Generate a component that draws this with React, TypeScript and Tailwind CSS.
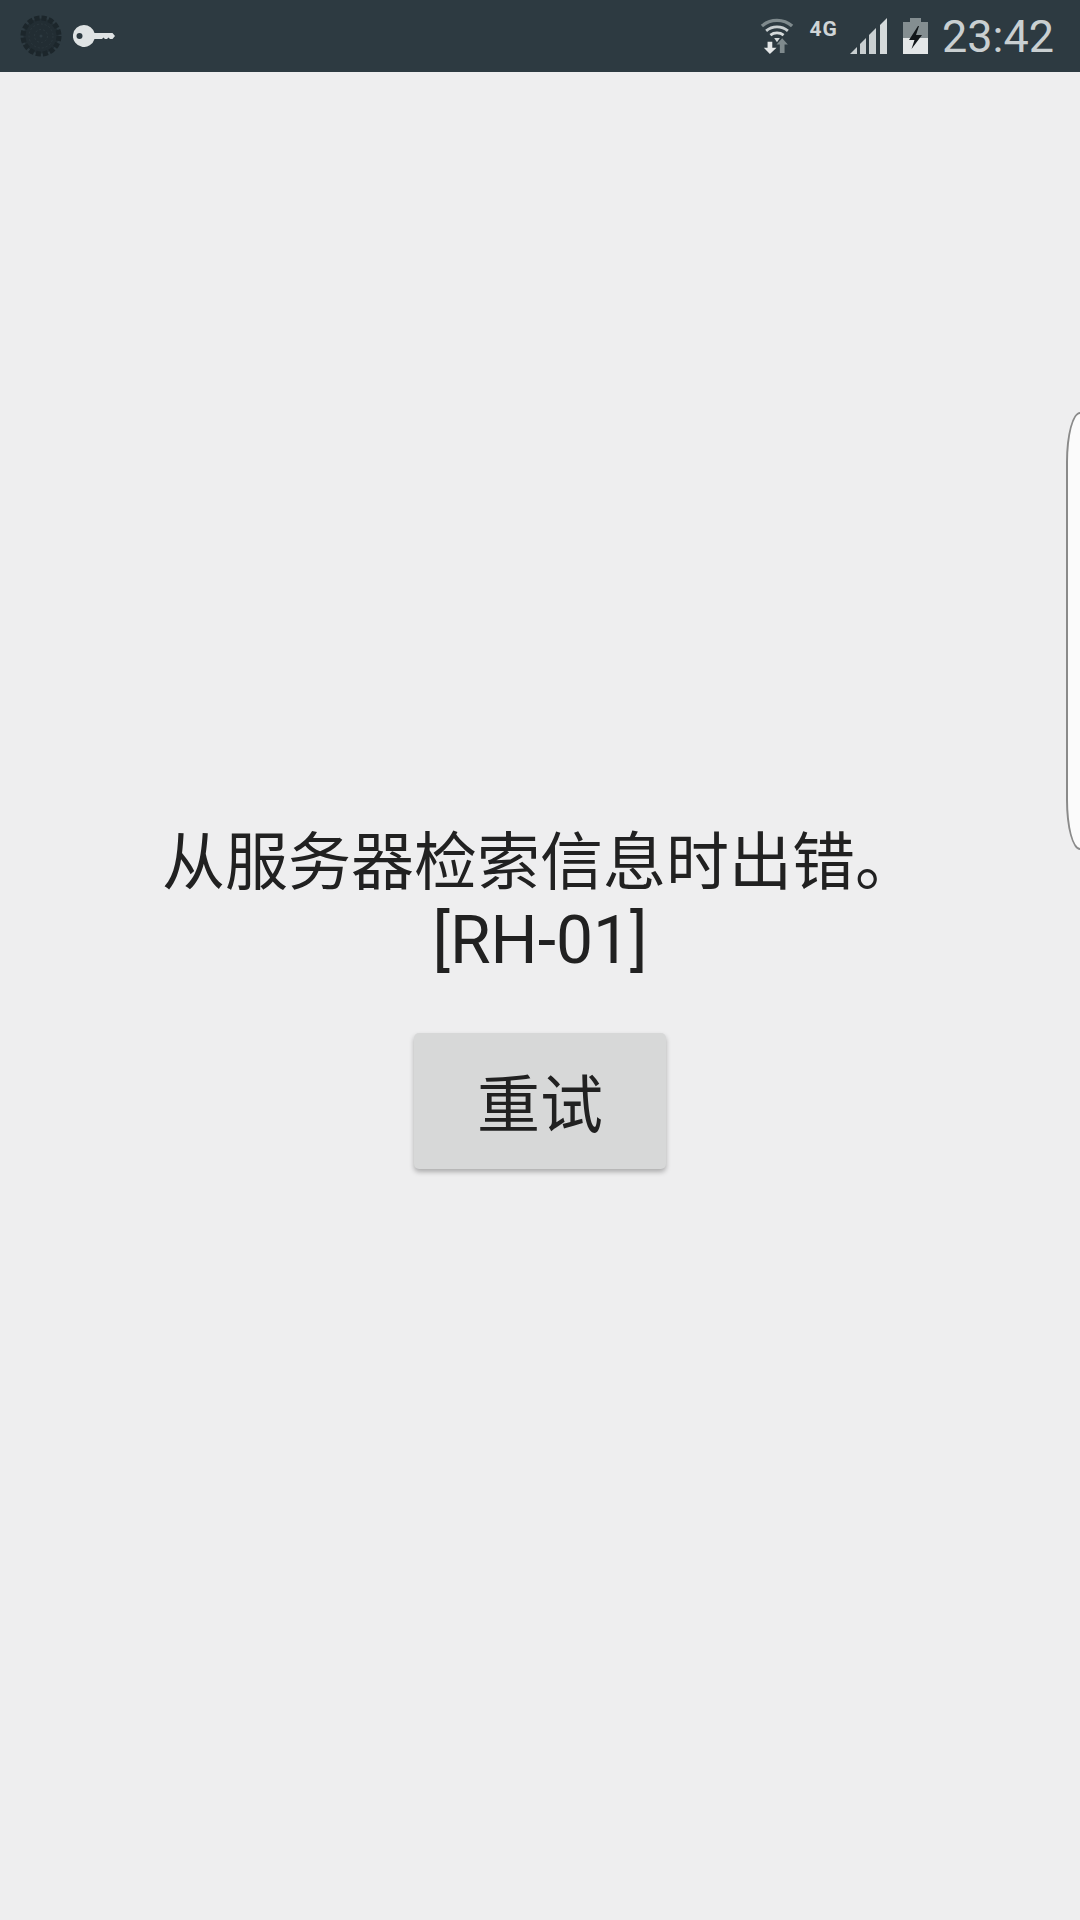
import React from "react";

const StatusIcons = () => (
  <div className="flex items-center">
    {/* wifi with up/down arrows */}
    <svg width="34" height="38" viewBox="0 0 36 40">
      <g fill="none">
        <path d="M2 9.5C11 1.5 25 1.5 34 9.5" stroke="#7f8a8d" strokeWidth="3.5" />
        <path d="M6.5 14.5C13 9 23 9 29.5 14.5" stroke="#c9cfd1" strokeWidth="3" />
        <path d="M11 19C15 16 21 16 25 19" stroke="#d5dadb" strokeWidth="3" />
      </g>
      <path d="M15 22h6l-3 4.500z" fill="#d5dadb" />
      <path d="M8 26h5v6.500h4.500L10.500 39 4 32.500h4z" fill="#e4e7e8" />
      <path d="M21 38v-9h-3.500l6-6.500 6 6.500H26v9z" fill="#7f8a8d" />
    </svg>
    <span className="ml-[16px] mb-[14px] text-[21px] tracking-[1px] leading-none font-bold text-[#d0d5d7] font-['Roboto',sans-serif]">
      4G
    </span>
    {/* signal bars */}
    <svg width="38" height="37" viewBox="0 0 38 37" className="ml-[12px]">
      <path d="M0 36l7-7v7z" fill="#c9cfd1" />
      <path d="M10 36V26l6-6v16z" fill="#c9cfd1" />
      <path d="M19 36V17l7-7v26z" fill="#c9cfd1" />
      <path d="M30 36V7l7-7v36z" fill="#d5dadb" />
    </svg>
    {/* battery charging */}
    <svg width="25" height="36" viewBox="0 0 25 36" className="ml-[15px]">
      <path d="M7 0h11v4h7v32H0V4h7z" fill="#848e91" />
      <path d="M0 20h25v16H0z" fill="#e4e7e8" />
      <path d="M15 8L6 22h5.500L8.500 31 19 17h-6l3-9z" fill="#111619" />
    </svg>
    <span className="ml-[14px] text-[45px] leading-none text-[#c9cfd1] font-['Roboto',sans-serif]">
      23:42
    </span>
  </div>
);

export default function App() {
  return (
    <div className="relative w-[1080px] h-[1920px] overflow-hidden bg-[#eeeeef] font-['Roboto','Noto_Sans_CJK_SC',sans-serif]">
      {/* status bar */}
      <div className="h-[72px] bg-[#2d3a41] flex items-center justify-between pl-[20px] pr-[26px]">
        <div className="flex items-center">
          <svg width="42" height="42" viewBox="0 0 42 42">
            <circle cx="21" cy="21" r="17.500" fill="#222d33" />
            <circle cx="21" cy="21" r="18" fill="none" stroke="#1c262b" strokeWidth="5" strokeDasharray="5 2.070" />
            <circle cx="21" cy="21" r="12" fill="none" stroke="#2b373d" strokeWidth="1" strokeDasharray="2 2" />
            <circle cx="21" cy="21" r="6.500" fill="none" stroke="#2b373d" strokeWidth="1" strokeDasharray="2 2" />
            <circle cx="21" cy="21" r="1.500" fill="#2d3a41" />
          </svg>
          <svg width="42" height="22" viewBox="0 0 42 22" className="ml-[11px]">
            <path
              d="M11 0a11 11 0 0 1 10.500 8h18L42 11l-2.500 3h-2.500l-1.500-1.500-1.500 1.500h-2l-1.500-1.500-1.500 1.500h-7.500A11 11 0 1 1 11 0z"
              fill="#dfe3e4"
            />
            <circle cx="6.500" cy="11" r="3" fill="#2d3a41" />
          </svg>
        </div>
        <StatusIcons />
      </div>

      {/* error message */}
      <div className="flex flex-col items-center pt-[752px]">
        <p className="text-[63px] leading-[78px] text-[#212121] text-center">
          从服务器检索信息时出错。
          <br />
          <span className="text-[66px]">[RH-01]</span>
        </p>
        <button className="mt-[52px] w-[252px] h-[136px] pt-[10px] rounded-[5px] bg-[#d7d8d8] text-[63px] text-[#212121] shadow-[0_3px_5px_rgba(0,0,0,0.28)]">
          重试
        </button>
      </div>

      {/* edge panel handle */}
      <div className="absolute right-[-20px] top-[412px] w-[34px] h-[438px] rounded-tl-[14px_50px] rounded-bl-[14px_50px] bg-[#fbfbfb] border-2 border-[#8a8a8a]" />
    </div>
  );
}
